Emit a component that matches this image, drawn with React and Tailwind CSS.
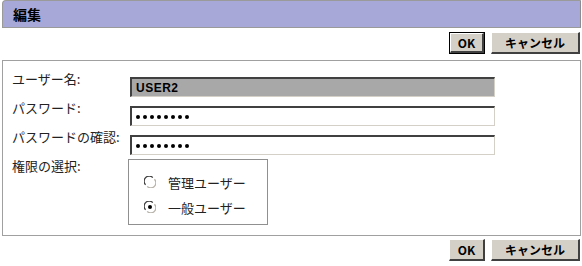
import React from "react";

const jp = { fontFamily: '"Noto Sans CJK JP", "Noto Sans", sans-serif' };

function Btn({ children, w, isDefault }) {
  return (
    <div className={"h-[22px] " + (isDefault ? "border border-black" : "")}>
      <div
        className={
          "h-full flex items-center justify-center bg-[#d4d0c8] border-t border-l border-t-white border-l-white border-r-2 border-b-2 border-r-[#404040] border-b-[#404040] text-[12px] font-semibold text-black leading-none " +
          w
        }
        style={jp}
      >
        {children}
      </div>
    </div>
  );
}

function Buttons({ top }) {
  return (
    <div className="flex justify-end items-start gap-[6px] pr-[1px]">
      <Btn w={top ? "w-[34px]" : "w-[36px]"} isDefault={top}>OK</Btn>
      <Btn w="w-[89px]">キャンセル</Btn>
    </div>
  );
}

function Field({ children, gray }) {
  return (
    <div
      className={
        "mt-[6px] w-[365px] h-[20px] flex items-center pl-[4px] border-t-2 border-l-2 border-t-[#404040] border-l-[#404040] border-r border-b border-r-[#d4d0c8] border-b-[#d4d0c8] " +
        (gray ? "bg-[#a8a8a8]" : "bg-white")
      }
    >
      {children}
    </div>
  );
}

function Dots() {
  return (
    <div className="flex gap-[3px]">
      {[0, 1, 2, 3, 4, 5, 6, 7].map((i) => (
        <span key={i} className="w-[4px] h-[4px] rounded-full bg-black" />
      ))}
    </div>
  );
}

function Radio({ checked, label }) {
  return (
    <div className="flex items-center h-[20px]">
      <svg width="12" height="12" viewBox="0 0 12 12">
        <circle cx="6" cy="6" r="5" fill="#fff" />
        <path d="M1.6 8.8 A5 5 0 0 1 8.8 1.6" stroke="#404040" strokeWidth="1.3" fill="none" />
        <path d="M3.2 10.4 A5 5 0 0 0 10.4 3.2" stroke="#b8b4ac" strokeWidth="1.3" fill="none" />
        {checked && <circle cx="6" cy="6" r="2" fill="#000" />}
      </svg>
      <span className="ml-[12px] text-[13px] text-[#222] leading-none" style={jp}>{label}</span>
    </div>
  );
}

export default function App() {
  return (
    <div className="w-[582px] h-[266px] bg-white pl-[2px] pr-[1px] overflow-hidden" style={jp}>
      <div className="h-[28px] bg-[#a8a8d8] border border-r-[#8c8c8c] border-[#9a9a9a] rounded-tl-[4px] flex items-center pl-[10px]">
        <span className="text-[14px] font-bold text-black leading-none">編集</span>
      </div>

      <div className="mt-[4px]">
        <Buttons top />
      </div>

      <div className="mt-[6px] h-[176px] border border-[#a0a0a0] pt-[10px] pl-[9px] flex flex-col gap-[3px] text-[13px] text-[#222]">
        <div className="flex items-start">
          <div className="w-[118px] leading-[16px]">ユーザー名:</div>
          <Field gray>
            <span className="text-[12px] font-semibold text-black tracking-[0.5px]" style={{ fontFamily: '"Liberation Sans", sans-serif' }}>USER2</span>
          </Field>
        </div>
        <div className="flex items-start">
          <div className="w-[118px] leading-[16px]">パスワード:</div>
          <Field><Dots /></Field>
        </div>
        <div className="flex items-start">
          <div className="w-[118px] leading-[16px] whitespace-nowrap">パスワードの確認:</div>
          <Field><Dots /></Field>
        </div>
        <div className="flex items-start">
          <div className="w-[116px] leading-[16px]">権限の選択:</div>
          <div className="mt-[1px] w-[140px] h-[66px] border border-[#909090] pt-[12px] pl-[15px] flex flex-col gap-[5px]">
            <Radio label="管理ユーザー" />
            <Radio checked label="一般ユーザー" />
          </div>
        </div>
      </div>

      <div className="mt-[3px]">
        <Buttons />
      </div>
    </div>
  );
}
